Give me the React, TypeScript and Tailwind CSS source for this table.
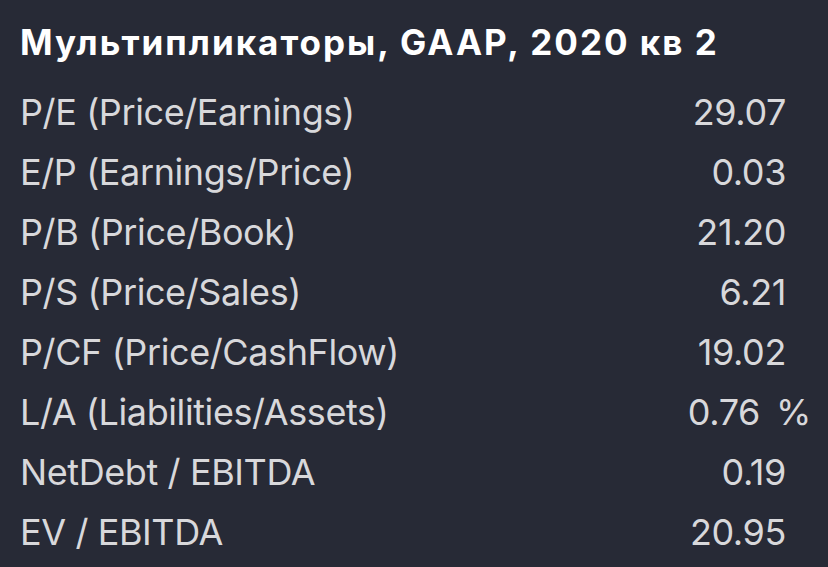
const rows: { label: string; value: string; unit?: string }[] = [
  { label: "P/E (Price/Earnings)", value: "29.07" },
  { label: "E/P (Earnings/Price)", value: "0.03" },
  { label: "P/B (Price/Book)", value: "21.20" },
  { label: "P/S (Price/Sales)", value: "6.21" },
  { label: "P/CF (Price/CashFlow)", value: "19.02" },
  { label: "L/A (Liabilities/Assets)", value: "0.76", unit: "%" },
  { label: "NetDebt / EBITDA", value: "0.19" },
  { label: "EV / EBITDA", value: "20.95" },
];

export default function App() {
  return (
    <div
      className="w-[828px] h-[567px] bg-[#272a36] pl-[20px] pr-[21px] overflow-hidden"
      style={{ fontFamily: "Inter, 'Noto Sans', sans-serif" }}
    >
      {/* Heading */}
      <div className="pt-[18px] mb-[16px] h-[66px] text-[35px] leading-[48px] font-bold text-white tracking-[2px] whitespace-nowrap">
        Мультипликаторы, GAAP, 2020 кв 2
      </div>

      {/* Multipliers table */}
      <div className="flex flex-col">
        {rows.map((r) => (
          <div
            key={r.label}
            className="flex justify-between h-[60px] leading-[60px] text-[36px] tracking-[-0.4px] text-[#d8d8db]"
          >
            <span>{r.label}</span>
            <span className="flex">
              <span>{r.value}</span>
              {r.unit ? (
                <span className="ml-[16px] mr-[-4px]">{r.unit}</span>
              ) : (
                <span className="w-[21px]" />
              )}
            </span>
          </div>
        ))}
      </div>
    </div>
  );
}
